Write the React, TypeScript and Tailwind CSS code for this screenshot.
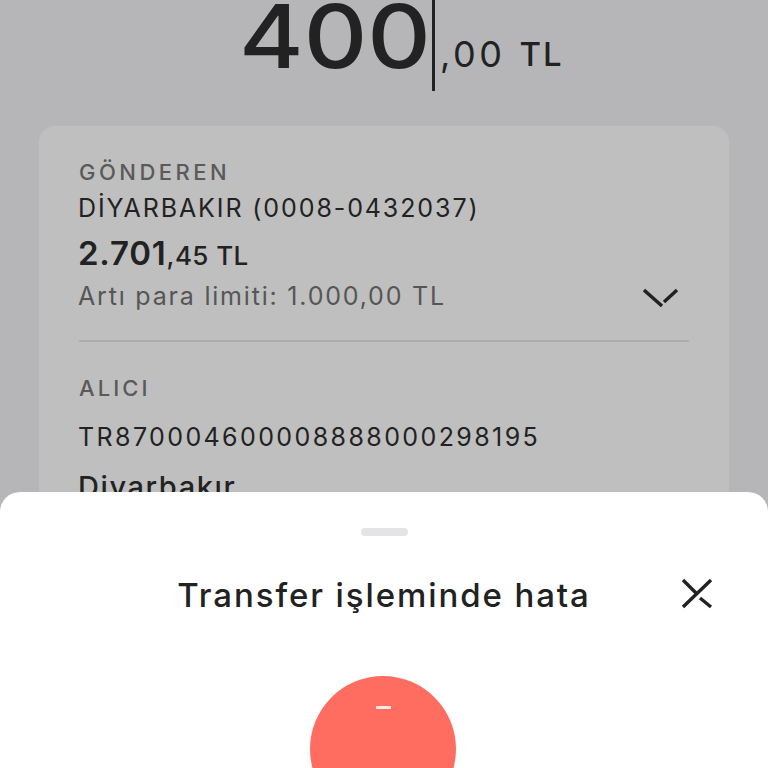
import React from "react";

const App: React.FC = () => {
  return (
    <div
      className="relative w-[768px] h-[768px] overflow-hidden bg-[#b6b6b8] text-[#222222]"
      style={{ fontFamily: '"Inter", "Noto Sans", sans-serif' }}
    >
      {/* Amount */}
      <div className="flex h-[91px] items-start pl-[239px]">
        <span className="mt-[4px] w-[193px] origin-left scale-x-[1.12] text-[88px] leading-[65px] font-medium">400</span>
        <div className="h-[91px] w-[3px] bg-[#222222]" />
        <span className="mt-[38px] ml-[5px] text-[36px] leading-[32px] tracking-[3.5px]">,00</span>
        <span className="mt-[38px] ml-[14px] text-[33px] leading-[32px] font-medium tracking-[2px]">TL</span>
      </div>

      {/* Transfer card */}
      <div className="mx-[39px] mt-[35px] rounded-t-2xl bg-[#bfbfbf] px-[40px] pt-[32px] h-[500px]">
        <div className="text-[22px] leading-[28px] font-medium tracking-[3.5px] text-[#5a5a5a]">GÖNDEREN</div>
        <div className="mt-[7px] ml-[-1px] text-[25px] leading-[30px] tracking-[1.9px]">DİYARBAKIR (0008-0432037)</div>
        <div className="mt-[12px] ml-[-1px] flex items-baseline leading-[36px]">
          <span className="text-[33px] font-semibold tracking-[0.8px]">2.701</span>
          <span className="text-[26px] font-medium tracking-[0.4px]">,45 TL</span>
        </div>
        <div className="mt-[6px] flex h-[34px] items-center justify-between pr-[10px]">
          <span className="ml-[-1px] text-[25px] tracking-[1.8px] text-[#565656]">Artı para limiti: 1.000,00 TL</span>
          <svg width="36" height="20" viewBox="0 0 36 20" fill="none" stroke="#222222" strokeWidth="3.4">
            <path d="M1 3L19 19M21 15L34 3" />
          </svg>
        </div>
        <div className="mt-[26px] h-[2px] bg-[#adadad]" />
        <div className="mt-[32px] text-[22px] leading-[28px] font-medium tracking-[3.1px] text-[#5a5a5a]">ALICI</div>
        <div className="mt-[20px] ml-[-1px] text-[25px] leading-[30px] tracking-[2.4px]">TR870004600008888000298195</div>
        <div className="mt-[17px] ml-[-1px] text-[29px] leading-[36px] font-medium tracking-[1.6px]">Diyarbakır</div>
      </div>

      {/* Bottom sheet */}
      <div className="absolute inset-x-0 top-[492px] h-[276px] rounded-t-[20px] bg-white">
        <div className="mx-auto mt-[36px] h-[8px] w-[47px] rounded-full bg-[#e4e4e6]" />
        <div className="relative mt-[35px] flex h-[48px] items-center justify-center">
          <span className="text-[33px] leading-[48px] font-medium tracking-[1.9px]">Transfer işleminde hata</span>
          <svg
            className="absolute left-[681px] top-[8px]"
            width="32"
            height="32"
            viewBox="0 0 32 32"
            fill="none"
            stroke="#222222"
            strokeWidth="3.400"
          >
            <path d="M2 28L30 1M2 1L16 15M19 19L30 28" />
          </svg>
        </div>
        <div className="relative ml-[310px] mt-[57px] h-[146px] w-[146px] rounded-full bg-[#ff6d60]">
          <div className="absolute left-[66px] top-[30px] h-[3px] w-[15px] bg-[#ffe9dd]" />
        </div>
      </div>
    </div>
  );
};

export default App;
